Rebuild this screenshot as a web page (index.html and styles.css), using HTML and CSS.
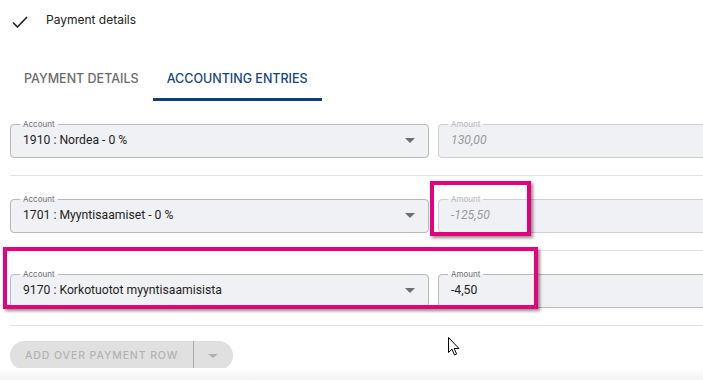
FILE: index.html
```html
<!DOCTYPE html>
<html>
<head>
    <title>Accounting entries</title>
    <link rel="stylesheet" href="styles.css">
</head>
<body>
    <div class="page">
        <div class="step">
            <svg class="check" width="16" height="12" viewBox="0 0 16 12">
                <path d="M1 6.5 L5.5 11 L15 1" fill="none" stroke="#222" stroke-width="1.6"/>
            </svg>
            <span>Payment details</span>
        </div>

        <div class="tabs">
            <div class="tab">Payment details</div>
            <div class="tab active">Accounting entries</div>
        </div>

        <div class="rows">
            <div class="entry">
                <fieldset class="field account">
                    <legend>Account</legend>
                    <div class="value">1910 : Nordea - 0 %</div>
                    <span class="arrow"></span>
                </fieldset>
                <fieldset class="field amount disabled">
                    <legend>Amount</legend>
                    <div class="value">130,00</div>
                </fieldset>
            </div>
            <div class="entry">
                <fieldset class="field account">
                    <legend>Account</legend>
                    <div class="value">1701 : Myyntisaamiset - 0 %</div>
                    <span class="arrow"></span>
                </fieldset>
                <fieldset class="field amount disabled">
                    <legend>Amount</legend>
                    <div class="value">-125,50</div>
                </fieldset>
            </div>
            <div class="entry">
                <fieldset class="field account">
                    <legend>Account</legend>
                    <div class="value">9170 : Korkotuotot myyntisaamisista</div>
                    <span class="arrow"></span>
                </fieldset>
                <fieldset class="field amount">
                    <legend>Amount</legend>
                    <div class="value">-4,50</div>
                </fieldset>
            </div>
        </div>

        <div class="actions">
            <div class="split-button">
                <span class="main">Add over payment row</span>
                <span class="more"><span class="arrow"></span></span>
            </div>
        </div>
        <div class="footer"></div>

        <!-- review markers -->
        <div class="mark mark-amount"></div>
        <div class="mark mark-row"></div>
        <svg class="cursor" width="12" height="19" viewBox="0 0 12 19">
            <path d="M0.5 0.5 L0.5 15.5 L4 12.2 L6.5 18 L8.6 17.1 L6.2 11.5 L11 11.5 Z" fill="#fff" stroke="#000" stroke-width="1"/>
        </svg>
    </div>
</body>
</html>
```

FILE: styles.css
```css
body {
    margin: 0;
    overflow: hidden;
    background-color: white;
    font-family: Inter, "Liberation Sans", sans-serif;
    color: #222;
}
.page {
    position: relative;
    width: 703px;
    height: 380px;
    overflow: hidden;
}
.step {
    display: flex;
    align-items: center;
    height: 38px;
    padding-left: 12px;
    font-size: 12px;
}
.step .check {
    margin-right: 18px;
    margin-top: 5px;
}
.tabs {
    display: flex;
    margin-top: 22px;
    padding-left: 10px;
}
.tab {
    padding: 11px 14px 12px;
    font-size: 12.5px;
    font-weight: 500;
    text-transform: uppercase;
    color: #6b6b6b;
    border-bottom: 3px solid transparent;
}
.tab.active {
    color: #17457f;
    border-bottom-color: #0f3e78;
}
.rows {
    margin-left: 10px;
    width: 800px;
}
.entry {
    display: flex;
    gap: 9px;
    padding: 18px 0 17px;
    border-bottom: 1px solid #e2e2e2;
}
.field {
    margin: 0;
    padding: 3px 12px 9px;
    height: 39px;
    box-sizing: border-box;
    border: 1px solid #b9b9b9;
    border-radius: 4px;
    background-color: #f0f1f4;
    display: flex;
    align-items: center;
    min-width: 0;
}
.field legend {
    font-size: 8px;
    line-height: 10px;
    padding: 0 3px;
    margin-left: -3px;
    color: #6e6e6e;
}
.field .value {
    flex: 1;
    font-family: Roboto, "Liberation Sans", sans-serif;
    font-size: 12.2px;
    line-height: 16px;
    color: #1e1e1e;
    white-space: nowrap;
}
.field.account {
    width: 419px;
    flex: none;
}
.field.amount {
    flex: 1;
}
.field.disabled {
    border-color: #cfcfcf;
}
.field.disabled legend {
    color: #b4b4b4;
}
.field.disabled .value {
    color: #9a9a9a;
    font-style: italic;
}
.arrow {
    width: 0;
    height: 0;
    border-left: 5px solid transparent;
    border-right: 5px solid transparent;
    border-top: 5px solid #6f6f6f;
    margin-right: 1px;
}
.actions {
    padding: 15px 0 0 10px;
}
.split-button {
    display: inline-flex;
    align-items: stretch;
    height: 29px;
    border-radius: 15px;
    background-color: #e0e0e0;
    color: #b3b3b3;
    font-size: 10.5px;
    font-weight: 500;
    letter-spacing: 0.9px;
    text-transform: uppercase;
}
.split-button .main {
    display: flex;
    align-items: center;
    padding: 0 15px 0 15px;
    border-right: 1px solid #a8a8a8;
}
.split-button .more {
    display: flex;
    align-items: center;
    padding: 0 14px 0 14px;
}
.split-button .arrow {
    border-top-color: #b0b0b0;
    border-left-width: 5px;
    border-right-width: 5px;
    border-top-width: 4px;
}
.footer {
    position: absolute;
    left: 0;
    right: 0;
    bottom: 0;
    height: 12px;
    background: linear-gradient(#ffffff, #f2f2f2);
}
.mark {
    position: absolute;
    border: 4px solid #e6007e;
    box-shadow: 2px 2px 3px rgba(0, 0, 0, 0.45);
    box-sizing: border-box;
}
.mark-amount {
    left: 430px;
    top: 181px;
    width: 101px;
    height: 55px;
}
.mark-row {
    left: 3px;
    top: 247px;
    width: 535px;
    height: 62px;
}
.cursor {
    position: absolute;
    left: 448px;
    top: 337px;
}
```
